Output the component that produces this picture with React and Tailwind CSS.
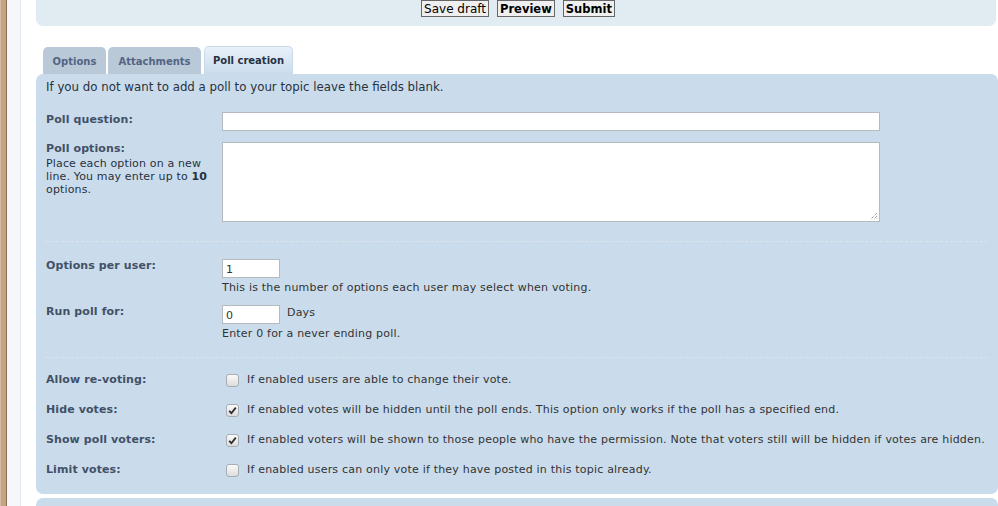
import React from 'react';

const font = { fontFamily: '"DejaVu Sans", Verdana, sans-serif' };

const Check = ({ on }) => (
  <span className="w-[13px] h-[13px] rounded-[3px] border border-[#a7adb3] bg-gradient-to-b from-[#fbfbfb] to-[#dcdcdc] flex items-center justify-center shrink-0">
    {on && (
      <svg width="9" height="9" viewBox="0 0 9 9">
        <path d="M1.2 4.8 L3.4 7.2 L7.8 1.6" fill="none" stroke="#2b2b2b" strokeWidth="1.8" />
      </svg>
    )}
  </span>
);

const Row = ({ label, children, className = '' }) => (
  <div className={`flex ${className}`}>
    <div className="w-[176px] shrink-0 text-[11px] font-bold text-[#425067] leading-[14px] tracking-[0.1px]">{label}</div>
    <div className="flex-1">{children}</div>
  </div>
);

const CheckRow = ({ label, on, text }) => (
  <div className="flex items-center h-[30px]">
    <div className="w-[180px] shrink-0 text-[11px] font-bold text-[#425067] tracking-[0.1px]">{label}</div>
    <Check on={on} />
    <span className="ml-[8px] text-[11px] text-[#333333] whitespace-nowrap tracking-[0.2px]">{text}</span>
  </div>
);

export default function App() {
  return (
    <div className="flex min-h-screen bg-white overflow-hidden" style={font}>
      <div className="flex shrink-0">
        <div className="w-[1px] bg-[#d6bea3]" />
        <div className="w-[5px] bg-[#c5a582]" />
        <div className="w-[1px] bg-[#8c6d52]" />
        <div className="w-[13px] bg-[#f5f7fa]" />
        <div className="w-[1px] bg-[#e4e8ed]" />
      </div>

      <div className="flex-1 pl-[15px] min-w-0">
        <div className="h-[26px] mr-[2px] bg-[#e1ebf2] rounded-b-[7px] flex justify-center gap-[8px] items-start pl-[4px]">
          <button className="h-[17px] px-[2px] border border-[#666] bg-[#efefef] text-[12px] leading-[14px] text-[#000]">Save draft</button>
          <button className="h-[17px] px-[2px] border border-[#666] bg-[#efefef] text-[11.5px] leading-[14px] font-bold text-[#000]">Preview</button>
          <button className="h-[17px] px-[2px] border border-[#666] bg-[#efefef] text-[11.5px] leading-[14px] font-bold text-[#000]">Submit</button>
        </div>

        <div className="flex items-end gap-[2px] ml-[7px] mt-[21px] h-[27px]">
          <div className="h-[27px] w-[63px] rounded-t-[5px] bg-[#b9c9d8] text-[#536482] text-[10px] font-bold flex items-center justify-center pt-[1px]">Options</div>
          <div className="h-[27px] w-[93px] rounded-t-[5px] bg-[#b9c9d8] text-[#536482] text-[10px] font-bold flex items-center justify-center pt-[1px]">Attachments</div>
          <div className="h-[28px] w-[89px] ml-[1px] rounded-t-[5px] border border-b-0 border-[#c9dbeb] bg-gradient-to-b from-[#e8f1f9] to-[#cadceb] text-[#28313f] text-[10px] font-bold flex items-center justify-center">Poll creation</div>
        </div>

        <div className="bg-[#cadceb] rounded-[7px] px-[10px] pt-[5px] pb-[9px]">
          <p className="text-[11.8px] leading-[16px] text-[#28313f]">If you do not want to add a poll to your topic leave the fields blank.</p>

          <Row label="Poll question:" className="mt-[17px] pt-[1px]">
            <div className="h-[19px] w-[658px] bg-white border border-[#b4bac0] -mt-[1px]" />
          </Row>
          <Row label={
            <>
              Poll options:
              <div className="font-normal text-[#28313f] leading-[13px] tracking-[0.15px] mt-[1px]">Place each option on a new line. You may enter up to <b>10</b> options.</div>
            </>
          } className="mt-[11px]">
            <div className="relative h-[80px] w-[658px] bg-white border border-[#b4bac0]">
              <svg className="absolute right-[1px] bottom-[1px]" width="8" height="8" viewBox="0 0 8 8">
                <path d="M7 1 L1 7 M7 4 L4 7 M7 6.5 L6.5 7" stroke="#777" strokeWidth="1" strokeDasharray="1 1" />
              </svg>
            </div>
          </Row>

          <div className="mt-[19px] border-t border-dashed border-[#dde3ea]" />

          <Row label="Options per user:" className="mt-[17px]">
            <div className="h-[19px] w-[58px] bg-white border border-[#b4bac0] text-[11px] text-[#333] pl-[3px] leading-[17px] pt-[1px]">1</div>
            <div className="text-[11px] text-[#333333] mt-[3px] leading-[14px] tracking-[0.2px]">This is the number of options each user may select when voting.</div>
          </Row>
          <Row label="Run poll for:" className="mt-[10px]">
            <div className="flex items-center">
              <div className="h-[19px] w-[58px] bg-white border border-[#b4bac0] text-[11px] text-[#333] pl-[3px] leading-[17px] pt-[1px]">0</div>
              <span className="ml-[7px] text-[11px] text-[#333] -mt-[3px] tracking-[0.2px]">Days</span>
            </div>
            <div className="text-[11px] text-[#333333] mt-[3px] leading-[14px] tracking-[0.2px]">Enter 0 for a never ending poll.</div>
          </Row>

          <div className="mt-[16px] border-t border-dashed border-[#dde3ea]" />

          <div className="mt-[7px]">
            <CheckRow label="Allow re-voting:" text="If enabled users are able to change their vote." />
            <CheckRow label="Hide votes:" on text="If enabled votes will be hidden until the poll ends. This option only works if the poll has a specified end." />
            <CheckRow label="Show poll voters:" on text="If enabled voters will be shown to those people who have the permission. Note that voters still will be hidden if votes are hidden." />
            <CheckRow label="Limit votes:" text="If enabled users can only vote if they have posted in this topic already." />
          </div>
        </div>

        <div className="mt-[4px] h-[40px] bg-[#cadceb] rounded-t-[7px]" />
      </div>
    </div>
  );
}
